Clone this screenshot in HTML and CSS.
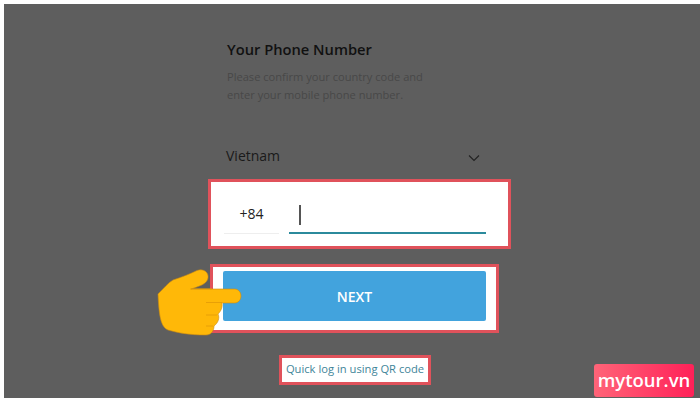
FILE: index.html
```html
<!DOCTYPE html>
<html lang="en">

<head>
  <meta charset="UTF-8">
  <title>Your Phone Number</title>
  <link rel="stylesheet" href="styles.css">
</head>

<body>
  <div class="screen">
    <div class="panel">
      <h1 class="title">Your Phone Number</h1>
      <p class="desc">Please confirm your country code and<br>enter your mobile phone number.</p>

      <div class="country">
        <span>Vietnam</span>
        <svg class="chevron" width="12" height="8" viewBox="0 0 12 8">
          <path d="M1 1.5 L6 6.5 L11 1.5" fill="none" stroke="#222" stroke-width="1.1" />
        </svg>
      </div>

      <div class="mark phone-mark">
        <div class="code">+84</div>
        <div class="number"><span class="caret"></span></div>
      </div>

      <div class="mark next-mark">
        <button class="next">NEXT</button>
      </div>

      <div class="mark qr-mark">
        <a class="qr">Quick log in using QR code</a>
      </div>
    </div>

    <!-- pointing hand over the next button -->
    <svg class="hand" width="120" height="90" viewBox="0 0 120 90">
      <path fill="#ffb808" stroke="#c98a10" stroke-width=".6"
        d="M18 39 C24 33 28 28 33 25 C42 22 50 19 57 15.500 C64 13 69 18 68 23 C67 29 60 31 51 34 L95 34 C103 35 103 47 95 48 L82 48 C83 53 80 57 78 59 C80 63 78 68 74 71 C74 76 71 80 66 80 C50 80 38 78 28 75 C21 72 19 62 18 39 Z" />
      <path fill="none" stroke="#e8a006" stroke-width="1" d="M50 34 L72 34 M66 47.500 L82 47.500 M66 60 L77 60 M66 71 L73 71" />
    </svg>

    <div class="badge">mytour.vn</div>
  </div>
</body>

</html>
```

FILE: styles.css
```css
html,
body {
  margin: 0;
  background: #fff;
}

body {
  font-family: "Open Sans", sans-serif;
}

.screen {
  position: relative;
  height: 394px;
  margin: 4px 0 7px 4px;
  background: #5e5e5e;
  overflow: hidden;
}

.panel {
  display: flex;
  flex-direction: column;
  align-items: flex-start;
  padding-left: 204px;
}

.title {
  margin: 36px 0 0 19px;
  font-size: 14.700px;
  line-height: 18px;
  font-weight: 600;
  color: #111;
}

.desc {
  margin: 10px 0 0 19px;
  font-size: 11.100px;
  line-height: 18px;
  color: #484848;
}

.country {
  display: flex;
  justify-content: space-between;
  align-items: center;
  width: 254px;
  margin: 42px 0 0 18px;
  font-size: 14px;
  line-height: 20px;
  color: #1a1a1a;
}

.chevron {
  margin-top: 4px;
}

.mark {
  box-sizing: border-box;
  background: #fff;
  border: 3px solid #e0525b;
}

.phone-mark {
  display: flex;
  gap: 10px;
  width: 303px;
  height: 70px;
  margin-top: 13px;
  padding: 21px 22px 12px 13px;
}

.code {
  box-sizing: border-box;
  width: 55px;
  padding-top: 1px;
  border-bottom: 1px solid #eee;
  font-size: 14px;
  text-align: center;
  color: #222;
}

.number {
  flex: 1;
  border-bottom: 2px solid #2b8a9c;
}

.caret {
  display: block;
  width: 2px;
  height: 20px;
  margin: 2px 0 0 10px;
  background: #555;
}

.next-mark {
  width: 289px;
  height: 69px;
  margin: 15px 0 0 2px;
  padding: 4px 10px;
}

.next {
  display: block;
  width: 263px;
  height: 50px;
  border: 0;
  border-radius: 2px;
  background: #42a3dd;
  font: 600 14px "Open Sans", sans-serif;
  color: #fff;
}

.qr-mark {
  width: 152px;
  height: 30px;
  margin: 22px 0 0 71px;
  text-align: center;
  line-height: 18px;
}

.qr {
  font-size: 11.200px;
  color: #3f8599;
}

.hand {
  position: absolute;
  left: 136px;
  top: 251px;
}

.badge {
  position: absolute;
  right: 6px;
  bottom: 1px;
  width: 100px;
  height: 33px;
  border-radius: 3px;
  background: linear-gradient(90deg, #ff6478, #ff2158);
  font: 600 18.500px/32px "Open Sans", sans-serif;
  text-align: center;
  color: #fff;
}
```
